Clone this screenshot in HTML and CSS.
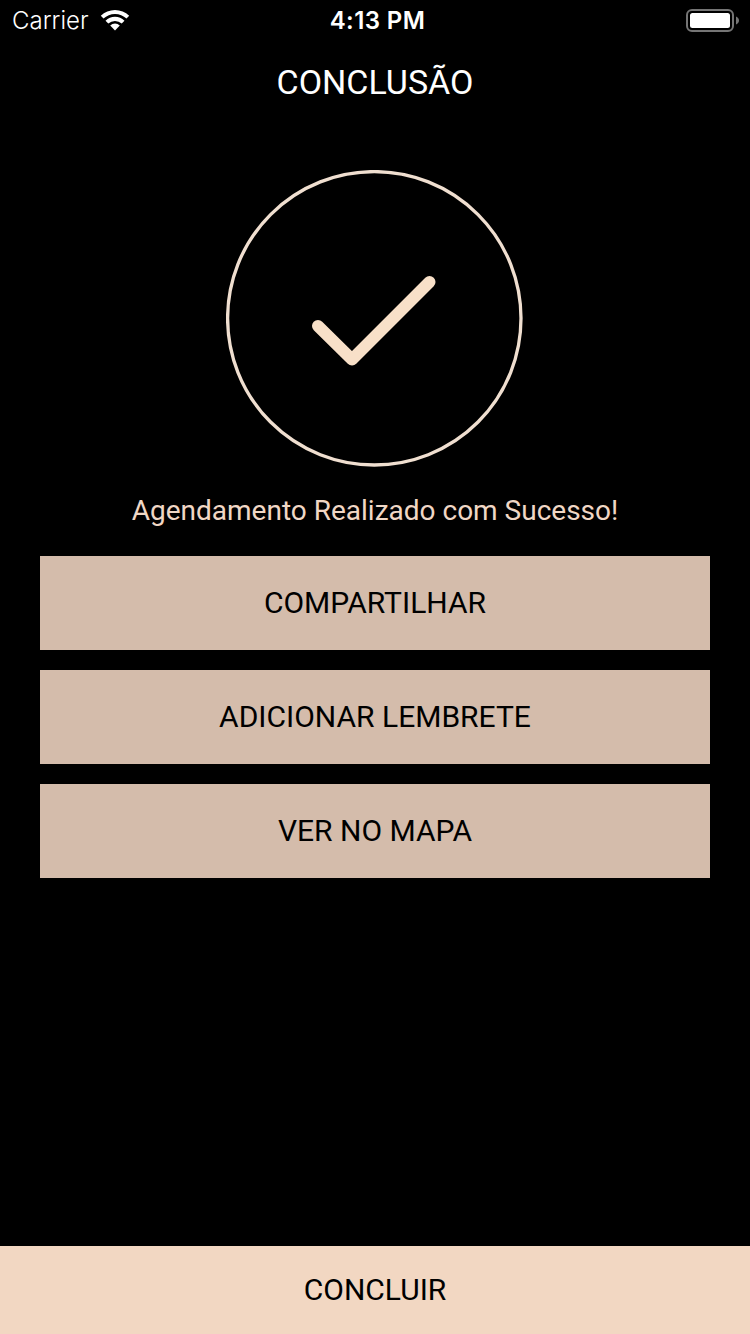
FILE: index.html
```html
<!DOCTYPE html>
<html lang="pt-BR">
<head>
  <meta charset="UTF-8">
  <meta name="viewport" content="width=device-width, initial-scale=1.0">
  <title>Conclusão</title>
  <link rel="stylesheet" href="styles.css">
</head>
<body>
  <div class="status-bar">
    <div class="carrier">
      <span>Carrier</span>
      <svg class="wifi" width="30" height="22" viewBox="0 0 30 22">
        <path d="M0.800 5.800a20.300 20.300 0 0 1 28.400 0l-2.700 2.800a16.400 16.400 0 0 0-23 0z"/>
        <path d="M5.500 10.700a13.600 13.600 0 0 1 19 0l-2.800 2.900a9.600 9.600 0 0 0-13.400 0z"/>
        <path d="M10.200 15.500a7 7 0 0 1 9.600 0L15 20.400z"/>
      </svg>
    </div>
    <span class="time">4:13 PM</span>
    <svg class="battery" width="54" height="24" viewBox="0 0 54 24">
      <rect class="battery-case" x="1" y="1" width="46" height="21" rx="5"/>
      <rect x="4" y="4" width="40" height="15" rx="2.5"/>
      <path class="battery-tip" d="M50 7.500c4 1.500 4 6.500 0 8z"/>
    </svg>
  </div>

  <h1>CONCLUSÃO</h1>

  <main>
    <svg class="check" width="298" height="298" viewBox="0 0 298 298">
      <circle cx="148.300" cy="148.300" r="146.700"/>
      <path d="M92 156l34 33.500 77.500-77.500"/>
    </svg>
    <p class="message">Agendamento Realizado com Sucesso!</p>
    <div class="actions">
      <button class="button">COMPARTILHAR</button>
      <button class="button">ADICIONAR LEMBRETE</button>
      <button class="button">VER NO MAPA</button>
    </div>
  </main>

  <button class="finish">CONCLUIR</button>
</body>
</html>
```
FILE: styles.css
```css
body {
  font-family: Roboto, Arial, sans-serif;
  background-color: #000;
  color: #fff;
  margin: 0;
  height: 1334px;
  display: flex;
  flex-direction: column;
}
.status-bar {
  display: grid;
  grid-template-columns: 1fr auto 1fr;
  align-items: center;
  box-sizing: border-box;
  height: 41px;
  padding: 0 10px 0 12px;
  font-family: Inter, sans-serif;
  font-size: 24px;
}
.carrier {
  display: flex;
  align-items: center;
  gap: 11px;
  font-weight: 350;
  letter-spacing: 0;
}
.time {
  padding-left: 3px;
  font-weight: 600;
  letter-spacing: 0.4px;
}
svg {
  fill: #fff;
}
.battery {
  justify-self: end;
}
.battery-case {
  fill: none;
  stroke: #757575;
  stroke-width: 2;
}
.battery-tip {
  fill: #757575;
}
h1 {
  margin: 0;
  height: 84px;
  line-height: 83px;
  font-size: 34px;
  font-weight: 400;
  text-align: center;
}
main {
  flex: 1;
  display: flex;
  flex-direction: column;
  align-items: center;
  padding: 45px 40px 0;
}
.check {
  fill: none;
  stroke: #f8e0c8;
}
.check circle {
  stroke: #f0dfd0;
  stroke-width: 3.3;
}
.check path {
  stroke-width: 12;
  stroke-linecap: round;
  stroke-linejoin: round;
}
.message {
  margin: 24px 0 26px;
  color: #f0d7c5;
  font-size: 28px;
  line-height: 38px;
}
.actions {
  width: 100%;
  display: flex;
  flex-direction: column;
  gap: 20px;
}
button {
  border: none;
  padding: 0 0 2px;
  color: #000;
  font-family: inherit;
  font-size: 30px;
}
.button {
  height: 94px;
  background-color: #d4bcab;
}
.finish {
  height: 88px;
  background-color: #f2d7c2;
}
```
